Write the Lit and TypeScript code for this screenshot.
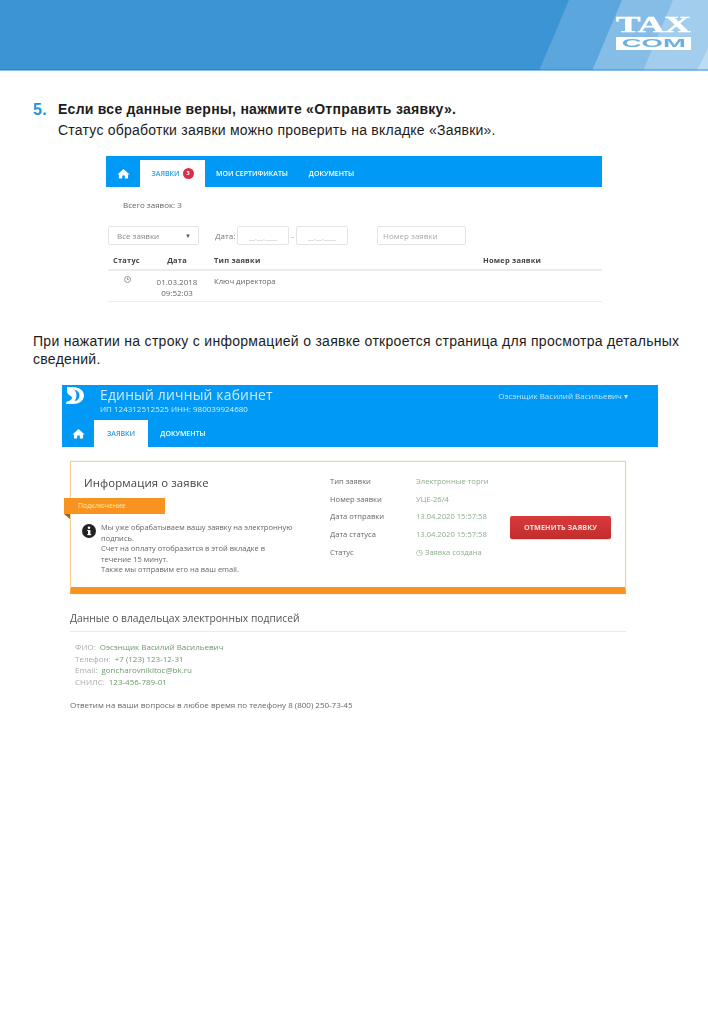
import { LitElement, html, css, svg } from "lit";
import { customElement } from "lit/decorators.js";

const homeIcon = svg`<path d="M8 1 L0.5 7.6 L2.4 7.6 L2.4 12.5 L6.4 12.5 L6.4 9 L9.6 9 L9.6 12.5 L13.6 12.5 L13.6 7.6 L15.5 7.6 Z" fill="currentColor"/>`;

@customElement("app-root")
export class AppRoot extends LitElement {
  static styles = css`
    :host { display: block; width: 708px; height: 1024px; background: #fff; overflow: hidden; font-family: "Liberation Sans", Arial, sans-serif; color: #1c1c1c; }
    .banner { position: relative; height: 71px; box-sizing: border-box; background: #3b95d5; }
    .banner svg { display: block; position: absolute; inset: 0; }
    .banner::after { content: ""; position: absolute; left: 0; right: 0; bottom: 0; height: 2px; background: linear-gradient(rgba(30, 110, 170, 0.35) 50%, #86c2ec 50%); }
    .logo { position: absolute; left: 616px; top: 16px; width: 75px; display: flex; flex-direction: column; gap: 4px; }
    .logo .tax { color: #fff; font: 700 23px/17px "Liberation Serif", serif; text-align: center; height: 17px; }
    .logo .tax span { display: inline-block; transform: scaleX(1.6); -webkit-text-stroke: 0.5px #fff; }
    .logo .com { background: #fff; color: #6fb0de; font: 700 11px/13px "Liberation Sans", sans-serif; text-align: center; height: 13px; }
    .logo .com span { display: inline-block; transform: scaleX(2.5); }

    .step { display: flex; margin: 28px 0 0 33px; font-size: 14px; line-height: 21px; letter-spacing: 0.235px; }
    .num { width: 25px; color: #2196e0; font-weight: 700; font-size: 16px; }
    .step b { letter-spacing: 0.26px; }

    .shot { font-family: "Open Sans", sans-serif; filter: blur(0.55px); color: #555; }
    .bar { background: #0099f5; display: flex; align-items: flex-end; color: #fff; }
    .tab { display: flex; align-items: center; justify-content: center; text-transform: uppercase; font-weight: 600; }
    .tab.on { background: #fff; color: #2a9be0; }
    .bar svg { display: block; }

    .s1 { margin: 15px 0 0 106px; width: 496px; font-size: 8px; }
    .s1 .bar { height: 31px; }
    .s1 .home { width: 34px; height: 27px; display: flex; align-items: center; justify-content: center; }
    .s1 .tab { height: 27px; font-size: 7px; }
    .s1 .t1 { width: 65px; gap: 3px; }
    .s1 .t2 { width: 94px; }
    .s1 .t3 { width: 65px; }
    .badge { width: 11px; height: 11px; border-radius: 50%; background: #d9304a; color: #fff; font-size: 6px; line-height: 11px; text-align: center; font-weight: 700; }
    .total { margin: 12px 0 0 17px; line-height: 11px; color: #666; }
    .filters { display: flex; align-items: center; margin: 16px 0 0 2px; color: #888; }
    .field { box-sizing: border-box; border: 1px solid #e4e4e4; border-radius: 2px; height: 19px; display: flex; align-items: center; background: #fff; }
    .sel { width: 91px; padding: 0 7px 0 8px; justify-content: space-between; }
    .sel i { font-style: normal; color: #555; font-size: 6px; }
    .dlabel { margin: 0 3px 0 16px; color: #777; width: 19px; white-space: nowrap; }
    .date { width: 52px; justify-content: center; color: #bbb; font-size: 7px; padding-top: 4px; }
    .dash { width: 7px; text-align: center; }
    .num-f { width: 89px; margin-left: 29px; padding-left: 5px; color: #aaa; }
    .thead, .trow { display: grid; grid-template-columns: 37px 64px 262px 1fr; margin-left: 2px; }
    .thead { margin-top: 6px; height: 18px; align-items: center; border-bottom: 2px solid #ececec; font-weight: 700; color: #444; font-size: 7.5px; letter-spacing: 0.2px; }
    .thead div:nth-child(1) { padding-left: 5px; }
    .thead div:nth-child(2) { text-align: center; }
    .thead div:nth-child(3) { padding-left: 5px; }
    .thead div:nth-child(4) { padding-left: 12px; }
    .trow { color: #666; line-height: 11px; padding-top: 5px; box-sizing: border-box; height: 31px; border-bottom: 1px solid #eee; }
    .trow .ic { display: flex; justify-content: center; padding-left: 2px; align-items: flex-start; }
    .trow .d { text-align: center; white-space: nowrap; }
    .trow .t { padding-left: 5px; font-size: 7.7px; }

    .para { margin: 30px 0 0 33px; width: 660px; font-size: 14px; line-height: 18px; letter-spacing: 0.29px; }

    .s2 { margin: 17px 0 0 62px; width: 596px; font-size: 8px; }
    .s2 .bar { height: 62px; flex-direction: column; align-items: stretch; }
    .brand { height: 35px; display: flex; position: relative; }
    .brand .mark { width: 38px; padding: 1px 0 0 3px; box-sizing: border-box; }
    .brand h1 { margin: 1px 0 0 0; font-weight: 400; font-size: 13.9px; line-height: 18px; color: #cfeafc; letter-spacing: 0.2px; white-space: nowrap; }
    .brand p { margin: 0; font-size: 8px; line-height: 10px; color: #d5eefc; white-space: nowrap; }
    .brand .user { margin-left: auto; padding: 5px 30px 0 0; color: #bfe4fb; font-size: 8px; line-height: 11px; white-space: nowrap; }
    .nav { display: flex; height: 27px; }
    .nav .home { width: 32px; display: flex; align-items: center; justify-content: center; }
    .nav .tab { font-size: 7px; }
    .nav .t1 { width: 54px; }
    .nav .t2 { width: 70px; }

    .card { box-sizing: border-box; position: relative; margin: 14px 0 0 8px; width: 556px; height: 133px; border: 1px solid #f7cf8f; border-bottom: 7px solid #f7931e; display: grid; grid-template-columns: 256px 180px 1fr; background: #fff; box-shadow: 0 0 2px #f5e6cc; }
    .card h2 { margin: 13px 0 0 13px; font-weight: 400; font-size: 11.4px; line-height: 15px; color: #444; letter-spacing: 0.1px; }
    .ribbon { position: absolute; left: -7px; top: 36px; width: 101px; height: 16px; background: #f7931e; color: #ffe3bb; font-size: 7px; line-height: 16px; padding-left: 14px; box-sizing: border-box; }
    .ribbon::after { content: ""; position: absolute; left: 0; top: 16px; border-top: 5px solid #a86510; border-left: 6px solid transparent; }
    .note { display: flex; gap: 5px; margin: 32px 0 0 11px; color: #666; font-size: 7.5px; line-height: 10.6px; white-space: nowrap; }
    .note svg { flex: none; margin-top: 2px; display: block; }
    .info { padding-top: 14px; display: grid; grid-template-columns: 86px 1fr; grid-auto-rows: 17.7px; font-size: 7.6px; align-items: start; color: #666; margin-left: 3px; white-space: nowrap; }
    .info .v { color: #8cae8c; }
    .btnw { display: flex; align-items: center; justify-content: flex-start; padding: 6px 0 0 3px; }
    .btn { width: 101px; height: 23px; border-radius: 2px; background: linear-gradient(#d93a3a, #c32d2d); color: #f6dede; text-align: center; font-size: 7.2px; line-height: 23px; font-weight: 700; letter-spacing: 0.1px; box-shadow: 0 1px 1px #ddd; }

    .owners { margin: 17px 0 0 8px; width: 556px; }
    .owners h3 { margin: 0; font-weight: 400; font-size: 10.3px; line-height: 15px; color: #555; padding-bottom: 5px; border-bottom: 1px solid #eaeaea; }
    .list { margin: 9px 0 0 5px; font-size: 8px; line-height: 11.6px; color: #aaa; }
    .list span { color: #6c9a6c; margin-left: 4px; }
    .help { margin-top: 12px; font-size: 8px; line-height: 11px; color: #666; }
  `;

  render() {
    return html`
      <div class="banner">
        <svg width="708" height="71" viewBox="0 0 708 71">
          <polygon points="569,0 708,0 708,71 539,71" fill="#5ba6dc"/>
          <polygon points="622,0 708,0 708,71 592,71" fill="#86bde6"/>
          <polygon points="673,0 708,0 708,71 643,71" fill="#a3cdec"/>
          <polygon points="708,48 708,71 697,71" fill="#bcdcf3"/>
        </svg>
        <div class="logo"><div class="tax"><span>TAX</span></div><div class="com"><span>COM</span></div></div>
      </div>

      <div class="step">
        <div class="num">5.</div>
        <div><b>Если все данные верны, нажмите «Отправить заявку».</b><br />Статус обработки заявки можно проверить на вкладке «Заявки».</div>
      </div>

      <div class="shot s1">
        <div class="bar">
          <div class="home"><svg width="13" height="11" viewBox="0 0 16 13">${homeIcon}</svg></div>
          <div class="tab on t1">Заявки <span class="badge">3</span></div>
          <div class="tab t2">Мои сертификаты</div>
          <div class="tab t3">Документы</div>
        </div>
        <div class="total">Всего заявок: 3</div>
        <div class="filters">
          <div class="field sel">Все заявки <i>▼</i></div>
          <span class="dlabel">Дата:</span>
          <div class="field date">__.__.____</div>
          <span class="dash">-</span>
          <div class="field date">__.__.____</div>
          <div class="field num-f">Номер заявки</div>
        </div>
        <div class="thead"><div>Статус</div><div>Дата</div><div>Тип заявки</div><div>Номер заявки</div></div>
        <div class="trow">
          <div class="ic"><svg width="7" height="7" viewBox="0 0 8 8" fill="none" stroke="#888"><circle cx="4" cy="4" r="3.4"/><path d="M4 2v2.2h1.6"/></svg></div>
          <div class="d">01.03.2018<br />09:52:03</div>
          <div class="t">Ключ директора</div>
          <div></div>
        </div>
      </div>

      <div class="para">При нажатии на строку с информацией о заявке откроется страница для просмотра детальных сведений.</div>

      <div class="shot s2">
        <div class="bar">
          <div class="brand">
            <div class="mark">
              <svg width="20" height="20" viewBox="0 0 20 20" fill="#fff"><path d="M2 1h6c6 0 11 3.500 11 8.500S14 18 8 18H1c0-2 1-3 3-3 2-1 3-2 3-3.500C7 10 2 9 2 5.500Z"/><path d="M9.500 3.500c3 1 5 3 5 6s-2 5-5 6c1-2 2-3.500 2-6s-1-4-2-6Z" fill="#0099f5"/></svg>
            </div>
            <div>
              <h1>Единый личный кабинет</h1>
              <p>ИП 124312512525 ИНН: 980039924680</p>
            </div>
            <div class="user">Оэсэнщик Василий Васильевич ▾</div>
          </div>
          <div class="nav">
            <div class="home"><svg width="13" height="11" viewBox="0 0 16 13">${homeIcon}</svg></div>
            <div class="tab on t1">Заявки</div>
            <div class="tab t2">Документы</div>
          </div>
        </div>

        <div class="card">
          <div>
            <h2>Информация о заявке</h2>
            <div class="note">
              <svg width="14" height="14" viewBox="0 0 14 14"><circle cx="7" cy="7" r="7" fill="#222"/><rect x="6" y="6" width="2.400" height="5" fill="#fff"/><rect x="5.200" y="6" width="2" height="1" fill="#fff"/><rect x="5.200" y="10.200" width="4" height="1" fill="#fff"/><circle cx="7" cy="3.800" r="1.300" fill="#fff"/></svg>
              <div>Мы уже обрабатываем вашу заявку на электронную<br />подпись.<br />Счет на оплату отобразится в этой вкладке в<br />течение 15 минут.<br />Также мы отправим его на ваш email.</div>
            </div>
          </div>
          <div class="info">
            <div>Тип заявки</div><div class="v">Электронные торги</div>
            <div>Номер заявки</div><div class="v">УЦЕ-26/4</div>
            <div>Дата отправки</div><div class="v">13.04.2020 15:57:58</div>
            <div>Дата статуса</div><div class="v">13.04.2020 15:57:58</div>
            <div>Статус</div><div class="v">◷ Заявка создана</div>
          </div>
          <div class="btnw"><div class="btn">ОТМЕНИТЬ ЗАЯВКУ</div></div>
          <div class="ribbon">Подключение</div>
        </div>

        <div class="owners">
          <h3>Данные о владельцах электронных подписей</h3>
          <div class="list">
            <div>ФИО:<span>Оэсэнщик Василий Васильевич</span></div>
            <div>Телефон:<span>+7 (123) 123-12-31</span></div>
            <div>Email:<span>goncharovnikitoc@bk.ru</span></div>
            <div>СНИЛС:<span>123-456-789-01</span></div>
          </div>
          <div class="help">Ответим на ваши вопросы в любое время по телефону 8 (800) 250-73-45</div>
        </div>
      </div>
    `;
  }
}
